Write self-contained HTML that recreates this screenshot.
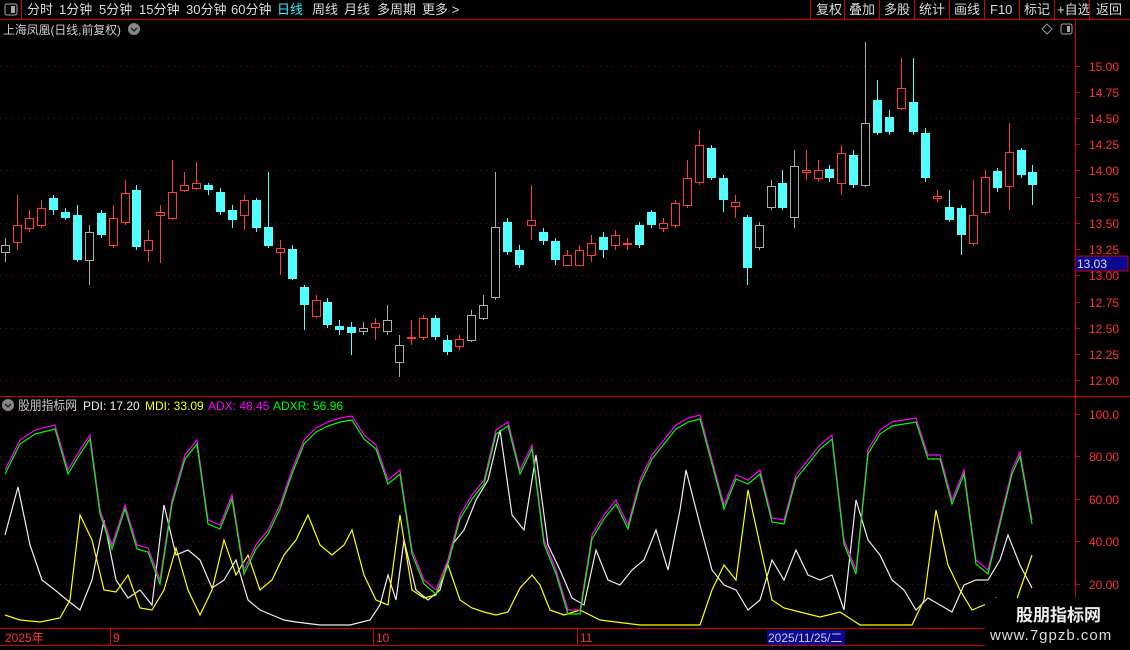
<!DOCTYPE html><html><head><meta charset="utf-8"><style>
body{margin:0;background:#000;width:1130px;height:650px;overflow:hidden;font-family:"Liberation Sans","Noto Sans CJK SC",sans-serif}
svg{position:absolute;left:0;top:0}
</style></head><body>
<svg id="s" width="1130" height="650" xmlns="http://www.w3.org/2000/svg" font-family="Liberation Sans, Noto Sans CJK SC, sans-serif">
<rect width="1130" height="650" fill="#000"/>
<line x1="0" y1="19.5" x2="1130" y2="19.5" stroke="#c00" />
<line x1="21.5" y1="0" x2="21.5" y2="19" stroke="#c00"/>
<rect x="5" y="4" width="12" height="11" rx="2" fill="none" stroke="#aaa"/><rect x="11" y="6" width="4" height="7" fill="#aaa"/>
<g font-size="13" fill="#ddd">
<text x="27" y="14">分时</text><text x="59" y="14">1分钟</text><text x="99" y="14">5分钟</text><text x="139" y="14">15分钟</text><text x="186" y="14">30分钟</text><text x="231" y="14">60分钟</text>
<text x="277" y="14" fill="#3ef">日线</text><text x="312" y="14">周线</text><text x="344" y="14">月线</text><text x="377" y="14">多周期</text><text x="422" y="14">更多 &gt;</text>
<text x="816" y="14">复权</text><text x="849" y="14">叠加</text><text x="884" y="14">多股</text><text x="919" y="14">统计</text><text x="954" y="14">画线</text><text x="990" y="14">F10</text><text x="1024" y="14">标记</text><text x="1057" y="14">+自选</text><text x="1096" y="14">返回</text>
</g>
<g stroke="#c00"><line x1="810.5" y1="0" x2="810.5" y2="19"/><line x1="844.5" y1="0" x2="844.5" y2="19"/><line x1="879.5" y1="0" x2="879.5" y2="19"/><line x1="914.5" y1="0" x2="914.5" y2="19"/><line x1="949.5" y1="0" x2="949.5" y2="19"/><line x1="984.5" y1="0" x2="984.5" y2="19"/><line x1="1019.5" y1="0" x2="1019.5" y2="19"/><line x1="1054.5" y1="0" x2="1054.5" y2="19"/><line x1="1089.5" y1="0" x2="1089.5" y2="19"/></g>
<text x="3" y="34" font-size="12" fill="#ccc" textLength="118" lengthAdjust="spacingAndGlyphs">上海凤凰(日线,前复权)</text>
<circle cx="134" cy="29" r="6" fill="#888"/><path d="M131 28l3 3 3-3" stroke="#222" fill="none" stroke-width="1.5"/>
<path d="M1047 24l5 5-5 5-5-5z" fill="none" stroke="#999"/>
<rect x="1061" y="24" width="11" height="10" rx="2" fill="none" stroke="#aaa"/><rect x="1067" y="26" width="3" height="6" fill="#aaa"/>
<line x1="1075.5" y1="20" x2="1075.5" y2="650" stroke="#c00"/>
<line x1="0" y1="396.5" x2="1130" y2="396.5" stroke="#c00"/>
<line x1="0" y1="628.5" x2="1130" y2="628.5" stroke="#c00"/>
<line x1="0" y1="645.5" x2="1130" y2="645.5" stroke="#c00"/>
<g id="grid"></g><g id="c"></g><g id="ind"></g>
<circle cx="8" cy="405" r="6" fill="#888"/><path d="M5 404l3 3 3-3" stroke="#222" fill="none" stroke-width="1.5"/>
<g font-size="12"><text x="18" y="410" fill="#ccc" font-size="13" textLength="59" lengthAdjust="spacingAndGlyphs">股朋指标网</text><text x="83" y="410" fill="#eee">PDI: 17.20</text><text x="145" y="410" fill="#ff0">MDI: 33.09</text><text x="208" y="410" fill="#f0f">ADX: 48.45</text><text x="273" y="410" fill="#0f0">ADXR: 56.96</text></g>
<g font-size="12" fill="#f33"><text x="5" y="642">2025年</text><text x="113" y="642">9</text><text x="376" y="642">10</text><text x="580" y="642">11</text></g>
<g stroke="#c00"><line x1="110.5" y1="629" x2="110.5" y2="645"/><line x1="373.5" y1="629" x2="373.5" y2="645"/><line x1="577.5" y1="629" x2="577.5" y2="645"/></g>
<rect x="767" y="630" width="78" height="15" fill="#0a0a90"/><text x="768" y="642" font-size="12" fill="#ccd">2025/11/25/二</text>
<rect x="1075" y="256" width="53" height="15" fill="#0a0a90" stroke="#c00"/><text x="1077" y="268" font-size="12" fill="#ddd">13.03</text>
<rect x="985" y="598" width="145" height="52" fill="#000"/>
<text x="1016" y="621" font-size="17" font-weight="bold" fill="#eee">股朋指标网</text>
<text x="990" y="640" font-size="15" fill="#ddd" letter-spacing="1">www.7gpzb.com</text>
</svg>
<script>
var NS="http://www.w3.org/2000/svg";function el(p,t,a){var e=document.createElementNS(NS,t);for(var k in a)e.setAttribute(k,a[k]);p.appendChild(e);return e}
var g=document.getElementById('grid');
var pl=[["15.00",66],["14.75",92],["14.50",118],["14.25",144],["14.00",170],["13.75",197],["13.50",223],["13.25",249],["13.00",275],["12.75",302],["12.50",328],["12.25",354],["12.00",380]];
pl.forEach(function(p,i){if(i%2==0)el(g,'line',{x1:0,y1:p[1]+.5,x2:1075,y2:p[1]+.5,stroke:'#900','stroke-dasharray':'1 5'});el(g,'line',{x1:1075,y1:p[1]+.5,x2:1080,y2:p[1]+.5,stroke:'#c00'});var t=el(g,'text',{x:1089,y:p[1]+5,'font-size':12,fill:'#f33'});t.textContent=p[0]});
[["100.0",414],["80.00",456],["60.00",499],["40.00",541],["20.00",584]].forEach(function(p){el(g,'line',{x1:0,y1:p[1]+.5,x2:1075,y2:p[1]+.5,stroke:'#900','stroke-dasharray':'1 5'});el(g,'line',{x1:1075,y1:p[1]+.5,x2:1080,y2:p[1]+.5,stroke:'#c00'});var t=el(g,'text',{x:1089,y:p[1]+5,'font-size':12,fill:'#f33'});t.textContent=p[0]});
var C=[[5,'w',245,252,238,262],[17,'r',225,242,195,250],[29,'r',218,228,210,232],[41,'r',208,225,200,228],[53,'c',198,210,195,215],[65,'c',212,218,208,220],[77,'c',215,260,205,262],[89,'w',232,260,225,285],[101,'c',213,235,210,238],[113,'r',218,245,205,248],[125,'r',193,222,180,225],[136,'c',190,247,185,250],[148,'r',240,250,230,262],[160,'r',212,215,205,263],[172,'r',192,218,160,220],[184,'r',185,190,172,192],[196,'r',183,188,162,190],[208,'c',185,190,183,195],[220,'c',192,212,188,215],[232,'c',210,220,205,228],[244,'r',200,215,195,230],[256,'c',200,228,198,232],[268,'c',227,246,172,248],[280,'r',248,252,240,275],[292,'c',249,279,245,280],[304,'c',287,305,285,330],[316,'r',300,316,295,318],[327,'c',302,325,298,328],[339,'c',326,330,320,335],[351,'c',327,333,322,355],[363,'w',328,331,322,335],[375,'r',323,327,318,340],[387,'w',320,331,305,335],[399,'w',345,362,335,377],[411,'r',337,338,320,345],[423,'r',318,337,315,340],[435,'c',318,337,315,340],[447,'c',340,352,335,355],[459,'r',339,346,335,350],[471,'w',315,340,310,342],[483,'w',305,318,295,320],[495,'w',227,297,172,300],[507,'c',222,252,218,255],[519,'c',250,265,245,268],[531,'r',220,225,185,240],[543,'c',232,241,228,245],[555,'c',241,260,238,265],[567,'r',255,265,250,266],[579,'r',250,265,245,266],[591,'r',243,255,235,262],[603,'c',237,250,232,258],[615,'r',235,245,230,250],[627,'r',243,244,238,250],[639,'c',225,245,222,248],[651,'c',212,225,210,228],[663,'r',223,228,218,232],[675,'r',203,225,200,228],[687,'r',178,205,160,208],[699,'r',145,182,130,185],[711,'c',148,178,145,180],[723,'c',178,200,175,212],[735,'r',202,206,195,218],[747,'c',217,268,215,285],[759,'w',225,247,222,250],[771,'w',186,207,180,210],[782,'c',183,208,170,210],[794,'w',166,217,150,228],[806,'r',170,172,150,180],[818,'r',170,178,160,182],[829,'c',169,178,165,182],[841,'r',153,183,145,195],[853,'c',155,185,150,188],[865,'w',123,185,42,187],[877,'c',100,133,80,135],[889,'c',117,132,110,135],[901,'r',88,108,58,110],[913,'c',102,132,58,135],[925,'c',133,178,128,182],[937,'r',196,198,190,202],[949,'c',207,220,190,222],[961,'c',208,235,205,255],[973,'r',215,243,180,246],[985,'r',177,212,170,215],[997,'c',171,188,168,192],[1009,'r',152,186,123,210],[1021,'c',150,175,148,178],[1032,'c',172,185,165,205]];
var cg=document.getElementById('c');var col={r:'#ff3b3b',c:'#54ffff',w:'#aaa'};
C.forEach(function(d){var x=d[0],c=col[d[1]];el(cg,'line',{x1:x+.5,y1:d[4],x2:x+.5,y2:d[5],stroke:c});var h=Math.max(1,d[3]-d[2]);
if(d[1]=='c')el(cg,'rect',{x:x-4,y:d[2],width:9,height:h,fill:c});else el(cg,'rect',{x:x-3.5,y:d[2]+.5,width:8,height:h,fill:'#000',stroke:c});});
function poly(pts,c,dy){var s=pts.map(function(p){return p[0]+','+(p[1]+(dy||0))}).join(' ');el(document.getElementById('ind'),'polyline',{points:s,fill:'none',stroke:c,'stroke-width':1.2})}
var M=[[5,470],[20,440],[35,430],[55,425],[68,470],[80,450],[90,435],[100,510],[112,545],[125,505],[137,545],[148,548],[160,580],[172,500],[185,455],[197,440],[208,520],[220,525],[232,495],[244,570],[256,545],[268,530],[280,505],[292,470],[304,440],[316,428],[328,422],[340,418],[352,416],[364,435],[376,445],[388,480],[400,470],[412,550],[424,580],[436,590],[448,560],[460,515],[472,495],[484,480],[496,430],[508,422],[520,470],[532,445],[544,540],[556,570],[568,610],[580,610],[592,535],[604,515],[616,500],[628,525],[640,480],[652,455],[664,440],[676,425],[688,418],[700,415],[712,460],[724,505],[736,475],[748,480],[760,470],[772,518],[784,520],[796,475],[808,460],[820,445],[832,435],[844,540],[856,570],[868,450],[880,430],[892,422],[904,420],[916,418],[928,455],[940,455],[952,500],[964,470],[976,560],[988,570],[1000,520],[1012,470],[1020,452],[1032,520]];
var W=[[5,535],[18,487],[30,545],[42,580],[55,590],[67,600],[80,610],[92,580],[104,520],[116,580],[128,598],[140,590],[152,605],[164,505],[176,555],[188,550],[200,560],[212,588],[224,580],[236,560],[248,600],[260,610],[272,615],[284,620],[296,622],[320,625],[350,625],[370,620],[380,605],[388,575],[396,600],[404,540],[416,590],[428,600],[440,590],[452,545],[464,530],[476,500],[488,480],[500,430],[512,515],[524,530],[536,455],[548,545],[560,570],[572,598],[584,605],[596,550],[608,580],[620,585],[632,570],[644,560],[656,530],[668,570],[680,510],[686,470],[700,525],[712,570],[724,585],[736,590],[748,610],[760,600],[772,560],[784,580],[796,550],[808,575],[820,580],[832,575],[844,610],[856,500],[868,540],[880,555],[892,580],[904,590],[916,610],[928,598],[940,605],[952,612],[964,585],[976,580],[988,580],[1000,560],[1008,535],[1020,565],[1032,588]];
var Y=[[5,615],[20,620],[40,622],[60,618],[70,600],[80,515],[92,540],[104,590],[116,592],[128,575],[140,608],[152,610],[164,590],[176,548],[188,590],[200,615],[212,590],[224,540],[236,575],[248,555],[260,590],[272,580],[284,555],[296,540],[308,515],[320,545],[332,555],[344,545],[352,530],[364,575],[376,600],[388,605],[400,515],[412,590],[424,598],[436,595],[448,565],[460,600],[472,608],[484,612],[496,615],[508,612],[520,588],[532,575],[540,585],[550,610],[564,615],[580,610],[600,620],[640,625],[700,625],[712,590],[724,565],[736,580],[748,490],[760,545],[772,600],[784,608],[800,612],[820,617],[840,612],[860,625],[912,625],[924,600],[936,510],[948,565],[960,590],[972,610],[984,605],[996,598],[1008,625],[1020,590],[1032,555]];
poly(W,'#eee');poly(Y,'#ff0');poly(M,'#f0f');poly(M,'#0f0',4);
</script>
</body></html>
